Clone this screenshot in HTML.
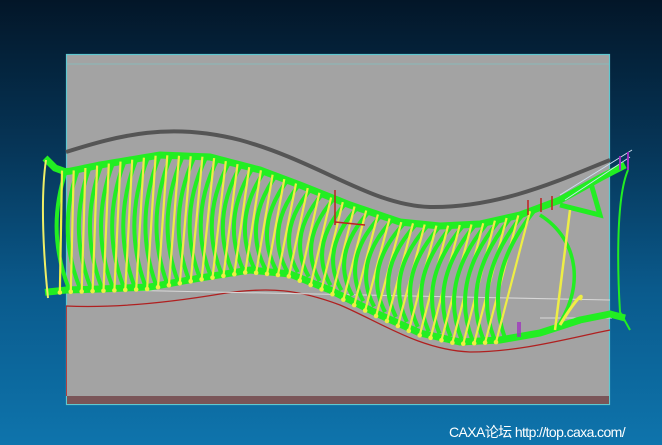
<!DOCTYPE html>
<html><head><meta charset="utf-8"><style>
html,body{margin:0;padding:0;}
body{width:662px;height:445px;overflow:hidden;background:linear-gradient(180deg,#031628 0%,#06375a 35%,#0a5a8c 65%,#0e74ac 100%);position:relative;font-family:"Liberation Sans","Noto Sans CJK SC",sans-serif;}
svg{position:absolute;left:0;top:0;}
.cap{position:absolute;left:449px;top:422px;color:#fff;font-size:14px;letter-spacing:-0.6px;}
</style></head><body>
<svg id="s" width="662" height="445" viewBox="0 0 662 445">
<rect x="66.5" y="54.5" width="543" height="350" fill="#a3a3a3" stroke="#5fc8d0" stroke-width="1.2"/>
<line x1="67" y1="64" x2="609" y2="64" stroke="#8ab8b8" stroke-width="1"/>
<rect x="67" y="396" width="542" height="8" fill="#7a5558"/>
<line x1="66.5" y1="306" x2="66.5" y2="396" stroke="#b04040" stroke-width="1"/>
<path d="M66,152 C120,135 170,122 240,140 C320,162 370,205 430,207 C500,208 560,180 610,160" fill="none" stroke="#555" stroke-width="4"/>
<path d="M66,306 C110,308 160,304 220,294 C270,286 300,290 340,305 C380,322 420,350 470,352 C520,352 570,338 610,330" fill="none" stroke="#b02020" stroke-width="1.3"/>
<line x1="66" y1="289" x2="610" y2="300" stroke="#d8d8d8" stroke-width="1"/>
<line x1="540" y1="318" x2="612" y2="318" stroke="#d8d8d8" stroke-width="1"/>
<g id="g"></g>
</svg>
<div class="cap">CAXA论坛 http://top.caxa.com/</div>
<script>
var T=[[45,158],[55,168],[66,172],[100,165],[160,155],[210,157],[260,170],[300,185],[350,205],[400,222],[440,226],[480,224],[520,215],[560,200],[600,178],[625,165]];
var B=[[48,292],[66,290],[100,289],[150,287],[200,278],[250,270],[290,274],[330,290],[380,315],[420,333],[460,342],[500,340],[540,333],[580,320],[610,314],[625,318]];
function f(P,x){for(var i=0;i<P.length-1;i++){if(x<=P[i+1][0]){var t=(x-P[i][0])/(P[i+1][0]-P[i][0]);return P[i][1]+t*(P[i+1][1]-P[i][1]);}}return P[P.length-1][1];}
var h='';
function pl(P){return P.map(function(p){return p.join(',')}).join(' ');}
var gT=[],gB=[];for(var x=45;x<=625;x+=5){gT.push([x,f(T,x)]);gB.push([x,f(B,x)]);}
h+='<polyline points="'+pl(gT)+'" fill="none" stroke="#22ee22" stroke-width="7"/>';
h+='<polyline points="'+pl(gB)+'" fill="none" stroke="#22ee22" stroke-width="7"/>';
for(var x=62;x<=530;x+=11.7){
 var l=(x-60)/470*32;var yt=f(T,x),xb=x-l,yb=f(B,xb);
 var my=(yt+yb)/2;
 h+='<path d="M'+(x+4)+','+yt+' Q'+(x-l-16)+','+my+' '+(xb+7)+','+(yb-2)+'" fill="none" stroke="#22ee22" stroke-width="4"/>';
 h+='<line x1="'+x+'" y1="'+yt+'" x2="'+(xb-2)+'" y2="'+(yb+2)+'" stroke="#eeee44" stroke-width="2.2"/>';
 h+='<circle cx="'+(xb-2)+'" cy="'+(yb+2)+'" r="2.3" fill="#eeee44"/>';
}
h+='<path d="M46,160 C40,200 44,260 48,298" fill="none" stroke="#eeee66" stroke-width="2"/>';
h+='<path d="M540,215 C580,240 585,290 555,330" fill="none" stroke="#22ee22" stroke-width="3.5"/>';
h+='<path d="M560,205 L600,215 L590,180" fill="none" stroke="#22ee22" stroke-width="5"/>';
h+='<path d="M570,210 L555,330" fill="none" stroke="#eeee44" stroke-width="2.5"/>';
h+='<path d="M560,325 C575,300 585,290 580,300" fill="none" stroke="#eeee44" stroke-width="3"/>';
h+='<path d="M628,170 C615,200 618,280 620,312 L630,330" fill="none" stroke="#22ee22" stroke-width="2"/>';
h+='<path d="M560,195 L632,150 M565,200 L630,157" stroke="#cce0f0" stroke-width="1"/>';
h+='<path d="M620,156 L620,170 M628,152 L628,170" stroke="#a030c0" stroke-width="2"/>';
h+='<path d="M528,215 v-15 M541,212 v-14 M552,210 v-14 M335,190 v35 M335,222 L365,225" stroke="#c02020" stroke-width="1.5"/>';
h+='<path d="M518,322 v15 M520,322 v15" stroke="#a030c0" stroke-width="1.5"/>';
document.getElementById('g').innerHTML=h;
</script>
</body></html>
